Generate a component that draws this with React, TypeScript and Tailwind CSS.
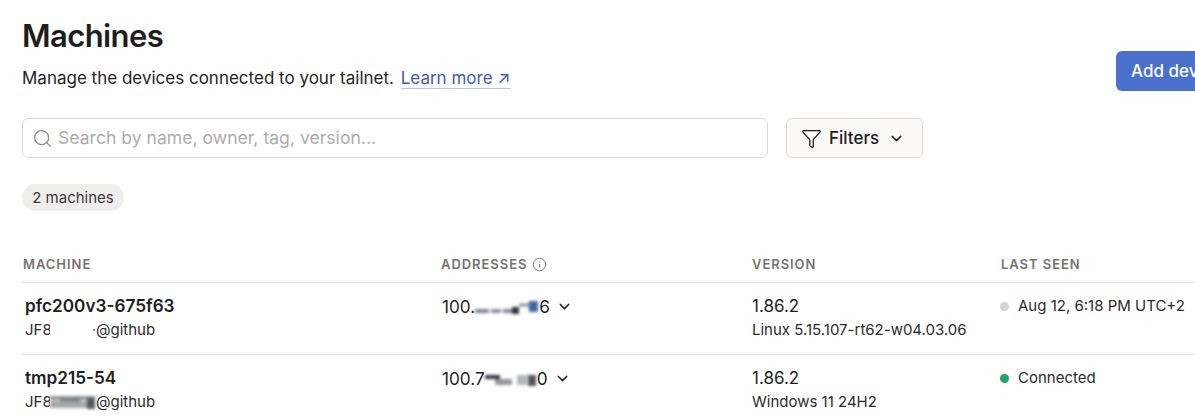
import { ChevronDown, Funnel, Info, Search } from "lucide-react";

const font = "font-['Inter',sans-serif]";

type Blot = [number, number, number, number, string];

function Smudge({ w, h, blots }: { w: number; h: number; blots: Blot[] }) {
  return (
    <svg width={w} height={h} viewBox={`0 0 ${w} ${h}`} className="shrink-0 overflow-visible">
      <g className="blur-[1.5px]">
        {blots.map(([x, y, bw, bh, fill], i) => (
          <rect key={i} x={x} y={y} width={bw} height={bh} fill={fill} />
        ))}
      </g>
    </svg>
  );
}

const addrOne: Blot[] = [
  [0, 11, 14, 4, "#7d8389"],
  [16, 11, 10, 4, "#8c9197"],
  [28, 11, 14, 4, "#858a90"],
  [37, 9, 7, 7, "#2c3742"],
  [44, 5, 12, 4, "#a4a9af"],
  [54, 3, 9, 11, "#3b6ba0"],
];

const addrTwo: Blot[] = [
  [0, 5, 15, 4, "#33373c"],
  [10, 9, 17, 6, "#94989c"],
  [32, 5, 10, 10, "#b4b7ba"],
  [43, 5, 8, 11, "#525458"],
];

const ownerTwo: Blot[] = [
  [0, 2, 45, 4, "#8f9295"],
  [0, 7, 45, 7, "#a6a9ab"],
  [37, 4, 8, 11, "#55595d"],
  [10, 5, 20, 2, "#6f7377"],
];

function Address({ prefix, suffix, gap, smudge }: { prefix: string; suffix: string; gap: number; smudge: Blot[] }) {
  return (
    <div className="flex h-[21px] items-center pl-[1px] text-[17.2px] text-[#1f1e1e]">
      <span>{prefix}</span>
      <Smudge w={gap} h={18} blots={smudge} />
      <span>{suffix}</span>
      <ChevronDown className="ml-[6px] h-[17px] w-[17px] text-[#2a2929]" strokeWidth={2} />
    </div>
  );
}

function Row({
  name,
  owner,
  address,
  version,
  os,
  dot,
  seen,
}: {
  name: string;
  owner: React.ReactNode;
  address: React.ReactNode;
  version: string;
  os: string;
  dot: string;
  seen: string;
}) {
  return (
    <div className="flex h-[72px] border-t border-[#e9e7e6] pt-[12px]">
      <div className="w-[419px] pl-[3px]">
        <div className="text-[17.2px] leading-[21px] font-semibold text-[#1f1e1e]">{name}</div>
        <div className="mt-[5px] text-[15px] leading-[18px] text-[#2c2b2b]">{owner}</div>
      </div>
      <div className="w-[311px] pt-[1px]">{address}</div>
      <div className="w-[248px] pt-[1px]">
        <div className="text-[17px] leading-[21px] text-[#1f1e1e]">{version}</div>
        <div className="mt-[4px] text-[15px] leading-[18px] text-[#2c2b2b]">{os}</div>
      </div>
      <div className="mt-[1px] flex h-[21px] items-center text-[15px] whitespace-nowrap text-[#2c2b2b]">
        <span className={`mr-[9px] h-[9px] w-[9px] rounded-full ${dot}`} />
        {seen}
      </div>
    </div>
  );
}

export default function App() {
  return (
    <div className={`h-[417px] w-[1195px] overflow-hidden bg-white pl-[22px] ${font}`}>
      <div className="w-[1228px]">
        <div className="flex items-start justify-between pt-[16px]">
          <div>
            <h1 className="text-[31px] leading-[40px] font-semibold tracking-[-0.6px] text-[#1f1e1e]">Machines</h1>
            <p className="mt-[9px] text-[17px] leading-[26px] text-[#1f1e1e]">
              Manage the devices connected to your tailnet.{" "}
              <a className="ml-[2px] border-b border-[#b9c8ea] text-[#3f5db0]">Learn more ↗</a>
            </p>
          </div>
          <button className="mt-[35px] h-[40px] w-[134px] rounded-[6px] bg-[#4b70cc] pt-[2px] pl-[15px] text-left text-[17px] font-medium whitespace-nowrap text-white">
            Add device
          </button>
        </div>

        <div className="mt-[27px] flex w-[901px] gap-[18px]">
          <div className="flex h-[40px] w-[746px] items-center rounded-[6px] border border-[#dcdad9] bg-white pl-[9px]">
            <Search className="h-[21px] w-[21px] text-[#8f8d8c]" strokeWidth={1.5} />
            <span className="ml-[5px] text-[17.6px] text-[#aeacab]">Search by name, owner, tag, version...</span>
          </div>
          <button className="flex h-[40px] w-[137px] items-center rounded-[6px] border border-[#dcdad9] bg-[#faf9f8] pt-[1px] pl-[14px] text-[17px] text-[#1f1e1e]">
            <Funnel className="h-[21px] w-[21px]" strokeWidth={1.5} />
            <span className="ml-[7px] font-medium">Filters</span>
            <ChevronDown className="ml-[9px] h-[17px] w-[17px]" strokeWidth={2} />
          </button>
        </div>

        <div className="mt-[26px] flex h-[27px] w-[102px] items-center justify-center rounded-full bg-[#f0eeed] pt-[1px] text-[15px] text-[#3a3939]">
          2 machines
        </div>

        <div className="mt-[36px] w-[1173px]">
          <div className="flex h-[35px] items-center text-[13px] font-semibold tracking-[0.95px] text-[#76736f]">
            <div className="w-[419px] pl-[1px]">MACHINE</div>
            <div className="flex w-[311px] items-center gap-[5px]">
              ADDRESSES <Info className="h-[15px] w-[15px]" strokeWidth={1.5} />
            </div>
            <div className="w-[248px]">VERSION</div>
            <div className="pl-[1px]">LAST SEEN</div>
          </div>
          <Row
            name="pfc200v3-675f63"
            owner={
              <span className="flex items-center">
                <span className="w-[25px] overflow-hidden">JF8</span>
                <span className="w-[46px] text-right text-[#77787a]">·</span>
                @github
              </span>
            }
            address={<Address prefix="100." suffix="6" gap={64} smudge={addrOne} />}
            version="1.86.2"
            os="Linux 5.15.107-rt62-w04.03.06"
            dot="bg-[#d7d5d4]"
            seen="Aug 12, 6:18 PM UTC+2"
          />
          <Row
            name="tmp215-54"
            owner={
              <span className="flex items-center">
                <span className="w-[25px] overflow-hidden">JF8</span>
                <Smudge w={46} h={16} blots={ownerTwo} />
                @github
              </span>
            }
            address={<Address prefix="100.7" suffix="0" gap={52} smudge={addrTwo} />}
            version="1.86.2"
            os="Windows 11 24H2"
            dot="bg-[#1fa36b]"
            seen="Connected"
          />
        </div>
      </div>
    </div>
  );
}
